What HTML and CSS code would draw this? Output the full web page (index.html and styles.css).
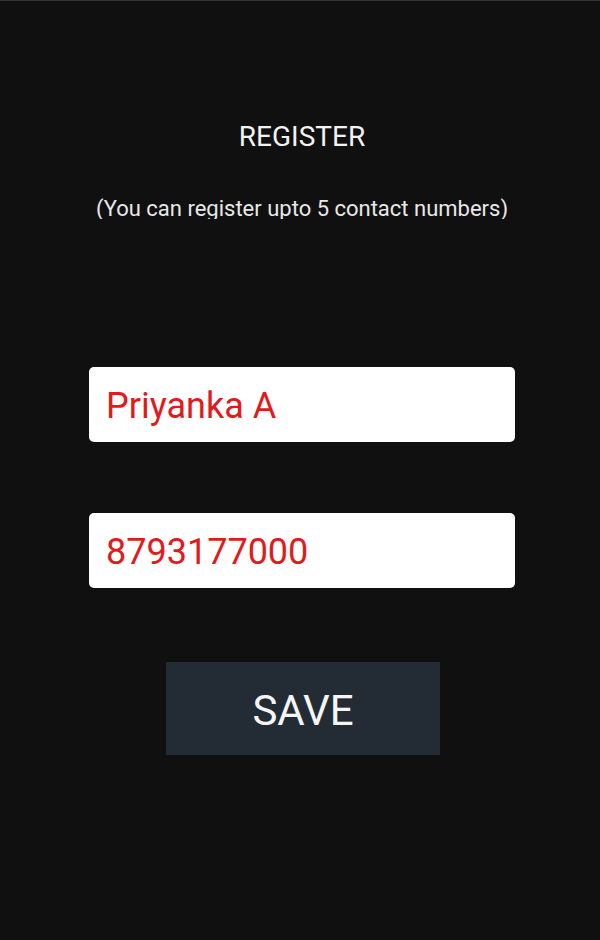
FILE: index.html
```html
<!DOCTYPE html>
<html>
<head>
<meta charset="utf-8">
<link rel="stylesheet" href="styles.css">
</head>
<body>
<div class="screen">
  <h1 class="title">REGISTER</h1>
  <div class="subtitle"><span>(You can register upto 5 contact numbers)</span></div>
  <div class="field">Priyanka A</div>
  <div class="field field-second">8793177000</div>
  <div class="save">SAVE</div>
</div>
</body>
</html>
```
FILE: styles.css
```css
html, body {
  margin: 0;
  padding: 0;
  background: #101010;
}
.screen {
  width: 600px;
  height: 940px;
  box-sizing: border-box;
  border-top: 1px solid #333;
  padding-left: 4px;
  display: flex;
  flex-direction: column;
  align-items: center;
  font-family: Roboto, "Noto Sans", sans-serif;
  overflow: hidden;
}
.title {
  margin: 119px 0 0;
  font-size: 28px;
  font-weight: 400;
  line-height: 34px;
  color: #f2f2f2;
}
.subtitle {
  margin-top: 42px;
  height: 23px;
  overflow: hidden;
  font-size: 22px;
  line-height: 26px;
  color: #e8e8e8;
}
.field {
  margin-top: 148px;
  width: 426px;
  height: 75px;
  box-sizing: border-box;
  background: #fff;
  border-radius: 5px;
  padding: 3px 0 0 17px;
  display: flex;
  align-items: center;
  font-size: 36px;
  color: #e11b1b;
}
.field-second {
  margin-top: 71px;
}
.save {
  margin-top: 74px;
  width: 274px;
  height: 93px;
  box-sizing: border-box;
  padding-top: 3px;
  background: #232c35;
  color: #f5f5f5;
  font-size: 42px;
  display: flex;
  align-items: center;
  justify-content: center;
  margin-left: 2px;
}
```
